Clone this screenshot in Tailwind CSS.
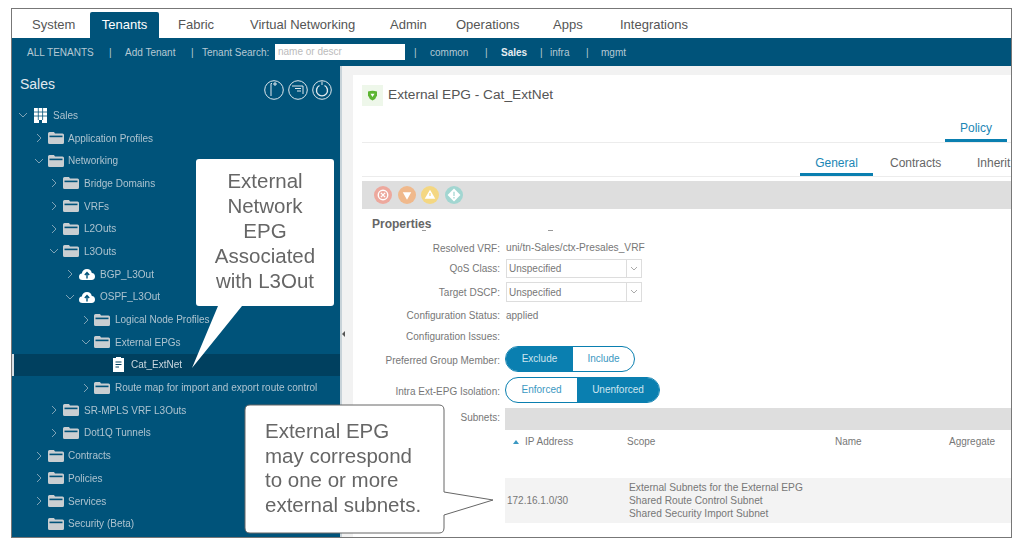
<!DOCTYPE html>
<html lang="en">
<head>
<meta charset="UTF-8">
<title>External EPG - Cat_ExtNet</title>
<script src="https://cdn.jsdelivr.net/npm/@tailwindcss/browser@4"></script>
</head>
<body class="relative w-[1023px] h-[546px] overflow-hidden bg-white font-['Liberation_Sans',Arial,sans-serif]">

<svg class="hidden">
  <symbol id="folder" viewBox="0 0 16 12"><path d="M0 1.5 Q0 0 1.5 0 H6 L7 1.5 H14.5 Q16 1.5 16 3 V10.5 Q16 12 14.5 12 H1.5 Q0 12 0 10.5 Z" fill="#c9ced1"/><rect x="1.5" y="3.6" width="13" height="1.6" fill="#00537a"/></symbol>
  <symbol id="right" viewBox="0 0 8 10"><path d="M2 1 L6 5 L2 9" fill="none" stroke="#7fa3b6" stroke-width="1"/></symbol>
  <symbol id="down" viewBox="0 0 10 8"><path d="M1 2 L5 6 L9 2" fill="none" stroke="#7fa3b6" stroke-width="1"/></symbol>
  <symbol id="cloud" viewBox="0 0 16 12"><path d="M3.5 12 Q0 12 0 8.8 Q0 6 2.8 5.6 Q3.6 1 8 1 Q12 1 12.8 5 Q16 5.4 16 8.6 Q16 12 12.5 12 Z" fill="#fff"/><path d="M8 10.5 V5 M5.8 7 L8 4.6 L10.2 7" fill="none" stroke="#00537a" stroke-width="1.4"/></symbol>
</svg>

<div class="mt-[8px] ml-[11px] w-[1001px] h-[530px] border border-[#777] flex flex-col overflow-hidden blur-[0.6px]">

  <!-- top tabs -->
  <div class="flex h-[29px] shrink-0 items-end text-[13px] text-[#555] bg-white">
    <div class="w-[78px] h-[26px] pl-[20px] leading-[26px]">System</div>
    <div class="w-[69px] h-[26px] bg-[#00537a] text-white text-center leading-[26px] rounded-t-[2px]">Tenants</div>
    <div class="w-[91px] h-[26px] pl-[19px] leading-[26px]">Fabric</div>
    <div class="w-[140px] h-[26px] leading-[26px]">Virtual Networking</div>
    <div class="w-[66px] h-[26px] leading-[26px]">Admin</div>
    <div class="w-[97px] h-[26px] leading-[26px]">Operations</div>
    <div class="w-[67px] h-[26px] leading-[26px]">Apps</div>
    <div class="h-[26px] leading-[26px]">Integrations</div>
  </div>

  <!-- sub nav -->
  <div class="flex h-[28px] shrink-0 items-center bg-[#00537a] text-[10px] text-[#b6c9d4] whitespace-nowrap">
    <span class="ml-[15px] w-[67px]">ALL TENANTS</span>
    <span class="ml-[15px] w-[16px]">|</span>
    <span class="w-[50px]">Add Tenant</span>
    <span class="ml-[16px] w-[11px]">|</span>
    <span class="w-[73px]">Tenant Search:</span>
    <div class="w-[130px] h-[16px] bg-white text-[#bbb] pl-[3px] leading-[15px]">name or descr</div>
    <span class="ml-[9px] w-[16px]">|</span>
    <span class="w-[40px]">common</span>
    <span class="ml-[15px] w-[16px]">|</span>
    <span class="w-[39px] font-bold text-[#e6edf1]">Sales</span>
    <span class="w-[10px]">|</span>
    <span class="w-[36px]">infra</span>
    <span class="w-[15px]">|</span>
    <span>mgmt</span>
  </div>

  <div class="flex flex-1 min-h-0">
    <!-- tree sidebar -->
    <div class="w-[328px] shrink-0 bg-[#00537a] text-[10px] text-[#adc3cf] relative">
      <div class="flex items-start h-[38px] pl-[8px] pr-[8px] pt-[10px]">
        <span class="text-[14px] leading-[16px] text-[#e0e9ee]">Sales</span>
        <div class="ml-auto flex gap-[4px] mt-[4px]">
          <svg class="w-[20px] h-[20px]" viewBox="0 0 20 20" fill="none" stroke="#dfe8ed" stroke-width="1"><circle cx="10" cy="10" r="9.3"/><path d="M7 16 V3.5 H8 M11 2 V6 M9 4 H13"/></svg>
          <svg class="w-[20px] h-[20px]" viewBox="0 0 20 20" fill="none" stroke="#dfe8ed" stroke-width="1"><circle cx="10" cy="10" r="9.3"/><path d="M4 6 H15 V14 M7 8.5 H13 M9 11 H13"/></svg>
          <svg class="w-[20px] h-[20px]" viewBox="0 0 20 20" fill="none" stroke="#dfe8ed" stroke-width="1"><circle cx="10" cy="10" r="9.3"/><path d="M12.5 5.5 A5.5 5.5 0 1 1 7.5 5.5" stroke-width="1.4"/><path d="M10 1.5 V5"/></svg>
        </div>
      </div>

      <div class="flex items-center h-[22.7px] pl-[6px]">
        <svg class="w-[10px] h-[8px]"><use href="#down"/></svg>
        <svg class="ml-[6px] w-[13px] h-[15px]" viewBox="0 0 13 15"><path d="M0 0 H13 V15 H8 V12 H5 V15 H0 Z" fill="#fff"/><path d="M4.3 0 V12 M8.6 0 V12 M0 4 H13 M0 8 H13" stroke="#00537a" stroke-width="0.8"/></svg>
        <span class="ml-[6px]">Sales</span>
      </div>
      <div class="flex items-center h-[22.7px] pl-[23px]"><svg class="w-[8px] h-[10px]"><use href="#right"/></svg><svg class="ml-[5px] w-[16px] h-[12px]"><use href="#folder"/></svg><span class="ml-[4px]">Application Profiles</span></div>
      <div class="flex items-center h-[22.7px] pl-[22px]"><svg class="w-[10px] h-[8px]"><use href="#down"/></svg><svg class="ml-[4px] w-[16px] h-[12px]"><use href="#folder"/></svg><span class="ml-[4px]">Networking</span></div>
      <div class="flex items-center h-[22.7px] pl-[38px]"><svg class="w-[8px] h-[10px]"><use href="#right"/></svg><svg class="ml-[5px] w-[16px] h-[12px]"><use href="#folder"/></svg><span class="ml-[5px]">Bridge Domains</span></div>
      <div class="flex items-center h-[22.7px] pl-[38px]"><svg class="w-[8px] h-[10px]"><use href="#right"/></svg><svg class="ml-[5px] w-[16px] h-[12px]"><use href="#folder"/></svg><span class="ml-[5px]">VRFs</span></div>
      <div class="flex items-center h-[22.7px] pl-[38px]"><svg class="w-[8px] h-[10px]"><use href="#right"/></svg><svg class="ml-[5px] w-[16px] h-[12px]"><use href="#folder"/></svg><span class="ml-[5px]">L2Outs</span></div>
      <div class="flex items-center h-[22.7px] pl-[37px]"><svg class="w-[10px] h-[8px]"><use href="#down"/></svg><svg class="ml-[4px] w-[16px] h-[12px]"><use href="#folder"/></svg><span class="ml-[5px]">L3Outs</span></div>
      <div class="flex items-center h-[22.7px] pl-[54px]"><svg class="w-[8px] h-[10px]"><use href="#right"/></svg><svg class="ml-[5px] w-[16px] h-[12px]"><use href="#cloud"/></svg><span class="ml-[5px]">BGP_L3Out</span></div>
      <div class="flex items-center h-[22.7px] pl-[53px]"><svg class="w-[10px] h-[8px]"><use href="#down"/></svg><svg class="ml-[4px] w-[16px] h-[12px]"><use href="#cloud"/></svg><span class="ml-[5px]">OSPF_L3Out</span></div>
      <div class="flex items-center h-[22.7px] pl-[70px]"><svg class="w-[8px] h-[10px]"><use href="#right"/></svg><svg class="ml-[4px] w-[16px] h-[12px]"><use href="#folder"/></svg><span class="ml-[5px]">Logical Node Profiles</span></div>
      <div class="flex items-center h-[22.7px] pl-[69px]"><svg class="w-[10px] h-[8px]"><use href="#down"/></svg><svg class="ml-[3px] w-[16px] h-[12px]"><use href="#folder"/></svg><span class="ml-[5px]">External EPGs</span></div>
      <div class="flex items-center h-[22.7px] pl-[99px] bg-[#00405f] border-l-2 border-[#d8dfe3] text-[#c9d7df]">
        <svg class="w-[11px] h-[15px]" viewBox="0 0 11 15"><path d="M0 1 H3 V0 H8 V1 H11 V15 H0 Z" fill="#fff"/><path d="M2.5 5 H8.5 M2.5 7.5 H8.5 M2.5 10 H6" stroke="#00405f" stroke-width="1"/></svg>
        <span class="ml-[7px]">Cat_ExtNet</span>
      </div>
      <div class="flex items-center h-[22.7px] pl-[70px]"><svg class="w-[8px] h-[10px]"><use href="#right"/></svg><svg class="ml-[4px] w-[16px] h-[12px]"><use href="#folder"/></svg><span class="ml-[5px]">Route map for import and export route control</span></div>
      <div class="flex items-center h-[22.7px] pl-[38px]"><svg class="w-[8px] h-[10px]"><use href="#right"/></svg><svg class="ml-[5px] w-[16px] h-[12px]"><use href="#folder"/></svg><span class="ml-[5px]">SR-MPLS VRF L3Outs</span></div>
      <div class="flex items-center h-[22.7px] pl-[38px]"><svg class="w-[8px] h-[10px]"><use href="#right"/></svg><svg class="ml-[5px] w-[16px] h-[12px]"><use href="#folder"/></svg><span class="ml-[5px]">Dot1Q Tunnels</span></div>
      <div class="flex items-center h-[22.7px] pl-[23px]"><svg class="w-[8px] h-[10px]"><use href="#right"/></svg><svg class="ml-[5px] w-[16px] h-[12px]"><use href="#folder"/></svg><span class="ml-[4px]">Contracts</span></div>
      <div class="flex items-center h-[22.7px] pl-[23px]"><svg class="w-[8px] h-[10px]"><use href="#right"/></svg><svg class="ml-[5px] w-[16px] h-[12px]"><use href="#folder"/></svg><span class="ml-[4px]">Policies</span></div>
      <div class="flex items-center h-[22.7px] pl-[23px]"><svg class="w-[8px] h-[10px]"><use href="#right"/></svg><svg class="ml-[5px] w-[16px] h-[12px]"><use href="#folder"/></svg><span class="ml-[4px]">Services</span></div>
      <div class="flex items-center h-[22.7px] pl-[36px]"><svg class="w-[16px] h-[12px]"><use href="#folder"/></svg><span class="ml-[4px]">Security (Beta)</span></div>
    </div>

    <!-- splitter -->
    <div class="w-[13px] shrink-0 bg-[#f2f2f2] border-l-2 border-[#c8d3d9] relative">
      <div class="absolute left-0 top-[265px] w-0 h-0 border-y-[3px] border-y-transparent border-r-[3px] border-r-[#555]"></div>
    </div>

    <!-- content -->
    <div class="flex-1 min-w-0 flex flex-col bg-[#f2f2f2] pt-[9px] text-[10px] text-[#777]">
      <div class="flex-1 bg-white pl-[9px] overflow-hidden">
        <div class="flex items-center h-[30px] mt-[5px] text-[13.7px] text-[#555]">
          <div class="w-[21px] h-[21px] bg-[#eef7ea] flex items-center justify-center">
            <svg class="w-[11px] h-[11px]" viewBox="0 0 11 11"><path d="M1 1.5 Q5.5 0 10 1.5 V5.5 Q9 9 5.5 10.5 Q2 9 1 5.5 Z" fill="#5cb531"/><path d="M3.5 3.8 H7.5 L5.5 7 Z" fill="#fff"/></svg>
          </div>
          <span class="ml-[5px]">External EPG - Cat_ExtNet</span>
        </div>

        <div class="h-[33px] border-b border-[#ececec] relative">
          <div class="absolute right-[4px] top-[10px] w-[62px] h-[22px] border-b-[3px] border-[#0a7fb0] text-center text-[12px] leading-[16px] text-[#1a86b5]">Policy</div>
        </div>
        <div class="h-[34px] relative border-b border-[#ececec]">
          <div class="absolute left-[438px] top-[11px] w-[73px] h-[22px] border-b-[3px] border-[#0a7fb0] text-center text-[12px] text-[#1a86b5]">General</div>
          <div class="absolute left-[528px] top-[11px] text-[12px] text-[#666]">Contracts</div>
          <div class="absolute left-[615px] top-[11px] text-[12px] text-[#666]">Inherit</div>
        </div>
        <div class="flex items-center gap-[5.5px] h-[28px] mt-[4px] bg-[#dedede] pl-[12px]">
          <svg class="w-[18px] h-[18px]" viewBox="0 0 17 17"><circle cx="8.5" cy="8.5" r="8.5" fill="#eda89d"/><circle cx="8.5" cy="8.5" r="4.5" fill="none" stroke="#fff" stroke-width="1.3"/><path d="M6.5 6.5 L10.5 10.5 M10.5 6.5 L6.5 10.5" stroke="#fff" stroke-width="1.3"/></svg>
          <svg class="w-[18px] h-[18px]" viewBox="0 0 17 17"><circle cx="8.5" cy="8.5" r="8.5" fill="#f0b98c"/><path d="M4.5 6 H12.5 L8.5 13 Z" fill="#fff"/></svg>
          <svg class="w-[18px] h-[18px]" viewBox="0 0 17 17"><circle cx="8.5" cy="8.5" r="8.5" fill="#f4d782"/><path d="M8.5 3.5 L13.5 12 H3.5 Z" fill="#fff"/><path d="M8.5 6.5 V9.5" stroke="#f4d782" stroke-width="1.2"/></svg>
          <svg class="w-[18px] h-[18px]" viewBox="0 0 17 17"><circle cx="8.5" cy="8.5" r="8.5" fill="#a2d6d1"/><rect x="4.2" y="4.2" width="8.6" height="8.6" transform="rotate(45 8.5 8.5)" fill="#fff"/><path d="M8.5 5.5 V9.5 M8.5 10.5 V11.8" stroke="#a2d6d1" stroke-width="1.2"/></svg>
        </div>
        <div class="h-[22px] pl-[10px] pt-[7px] text-[12px] leading-[16px] font-bold text-[#666] relative">Properties
          <div class="absolute left-[60px] top-[21px] w-[4px] h-px bg-[#999]"></div>
          <div class="absolute left-[186px] top-[21px] w-[5px] h-px bg-[#999]"></div>
        </div>

        <!-- property rows -->
        <div class="flex items-center h-[16px] mt-[9px]"><span class="w-[138px] text-right">Resolved VRF:</span><span class="ml-[6px] text-[10.2px]">uni/tn-Sales/ctx-Presales_VRF</span></div>
        <div class="flex items-center h-[19px] mt-[3px]"><span class="w-[138px] text-right">QoS Class:</span>
          <div class="ml-[6px] w-[136px] h-[19px] border border-[#ddd] flex items-center pl-[2px]"><span class="flex-1">Unspecified</span><div class="w-[15px] h-full border-l border-[#ddd] flex items-center justify-center"><svg class="w-[8px] h-[6px]" viewBox="0 0 8 6"><path d="M1 1 L4 4 L7 1" fill="none" stroke="#aaa"/></svg></div></div>
        </div>
        <div class="flex items-center h-[20px] mt-[4px]"><span class="w-[138px] text-right">Target DSCP:</span>
          <div class="ml-[6px] w-[136px] h-[20px] border border-[#ddd] flex items-center pl-[2px]"><span class="flex-1">Unspecified</span><div class="w-[15px] h-full border-l border-[#ddd] flex items-center justify-center"><svg class="w-[8px] h-[6px]" viewBox="0 0 8 6"><path d="M1 1 L4 4 L7 1" fill="none" stroke="#aaa"/></svg></div></div>
        </div>
        <div class="flex items-center h-[16px] mt-[5px]"><span class="w-[138px] text-right">Configuration Status:</span><span class="ml-[6px]">applied</span></div>
        <div class="flex items-center h-[16px] mt-[5px]"><span class="w-[138px] text-right">Configuration Issues:</span></div>
        <div class="flex items-center h-[26px] mt-[2px]"><span class="w-[138px] text-right pt-[2px]">Preferred Group Member:</span>
          <div class="ml-[5px] flex h-[26px] w-[130px] rounded-full border border-[#0a7fb0] overflow-hidden text-center leading-[24px]">
            <div class="w-[67px] bg-[#0a7fb0] text-[#cfe5ef]">Exclude</div><div class="flex-1 text-[#3b98c2]">Include</div>
          </div>
        </div>
        <div class="flex items-center h-[26px] mt-[5px]"><span class="w-[138px] text-right pt-[2px]">Intra Ext-EPG Isolation:</span>
          <div class="ml-[5px] flex h-[26px] w-[155px] rounded-full border border-[#0a7fb0] overflow-hidden text-center leading-[24px]">
            <div class="w-[71px] text-[#3b98c2]">Enforced</div><div class="flex-1 bg-[#0a7fb0] text-[#cfe5ef]">Unenforced</div>
          </div>
        </div>
        <div class="flex items-center h-[22px] mt-[5px]"><span class="w-[138px] text-right pb-[4px]">Subnets:</span><div class="ml-[5px] flex-1 h-full bg-[#dedede]"></div></div>

        <!-- subnet table -->
        <div class="flex h-[19px] items-end ml-[143px]">
          <div class="w-[122px] pl-[8px] flex items-center"><span class="w-0 h-0 border-x-[3px] border-x-transparent border-b-[4px] border-b-[#3b98c2]"></span><span class="ml-[6px]">IP Address</span></div>
          <div class="w-[208px]">Scope</div>
          <div class="w-[114px]">Name</div>
          <div>Aggregate</div>
        </div>
        <div class="flex items-center h-[45px] mt-[29px] ml-[143px] bg-[#f3f3f3]">
          <div class="w-[124px] pl-[2px]">172.16.1.0/30</div>
          <div class="leading-[13px] text-[10.2px]">External Subnets for the External EPG<br>Shared Route Control Subnet<br>Shared Security Import Subnet</div>
        </div>
      </div>
    </div>
  </div>
</div>

<!-- callouts -->
<svg class="absolute left-0 top-0 w-[1023px] h-[546px] blur-[0.3px]" viewBox="0 0 1023 546">
  <path d="M199 159 H331 Q334 159 334 162 V303 Q334 306 331 306 H242 L192 368 L218 306 H199 Q196 306 196 303 V162 Q196 159 199 159 Z" fill="#fff"/>
  <path d="M250 405 H439 Q444 405 444 410 V492 L493 500 L444 515 V528 Q444 533 439 533 H250 Q245 533 245 528 V410 Q245 405 250 405 Z" fill="#fff" stroke="#666" stroke-width="1"/>
</svg>
<div class="absolute left-[196px] top-[168px] w-[138px] text-center text-[20.5px] leading-[25px] text-[#666] blur-[0.4px]">External<br>Network<br>EPG<br>Associated<br>with L3Out</div>
<div class="absolute left-[265px] top-[419px] text-[20.5px] leading-[24.7px] text-[#666] whitespace-nowrap blur-[0.4px]">External EPG<br>may correspond<br>to one or more<br>external subnets.</div>

</body>
</html>
